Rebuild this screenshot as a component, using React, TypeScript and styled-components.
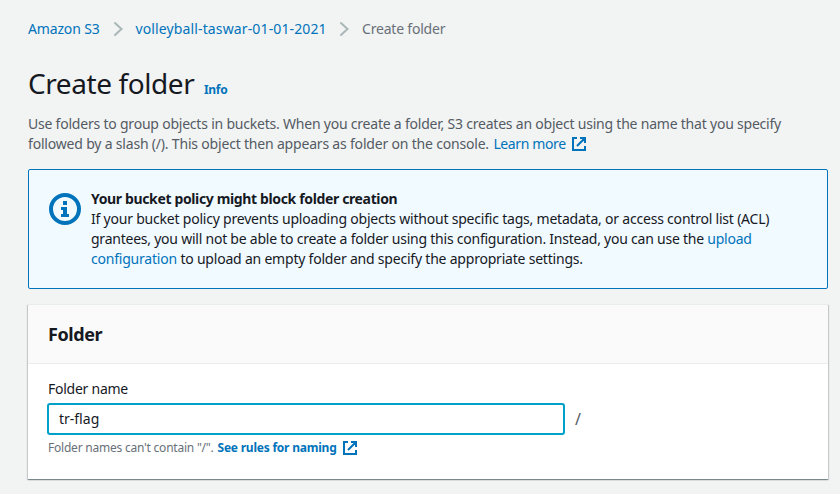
import React from 'react';
import styled, { createGlobalStyle } from 'styled-components';

const GlobalStyle = createGlobalStyle`
  * { box-sizing: border-box; }
  body {
    margin: 0;
    background: #f2f3f3;
    color: #16191f;
    font: 400 14px/20px "Noto Sans", "Open Sans", sans-serif;
  }
`;

const Page = styled.main`
  width: 800px;
  min-height: 494px;
  margin-left: 28px;
  padding-top: 19px;
`;

const Line = styled.span<{ $track?: number }>`
  display: block;
  white-space: nowrap;
  letter-spacing: ${(p) => p.$track ?? 0}px;
`;

const Breadcrumbs = styled.nav`
  display: flex;
  align-items: center;
  height: 20px;
`;

const Link = styled.a`
  color: #0073bb;
  text-decoration: none;
`;

const Crumb = styled(Link)<{ $width: number; $track?: number }>`
  width: ${(p) => p.$width}px;
  white-space: nowrap;
  letter-spacing: ${(p) => p.$track ?? 0}px;
`;

const CurrentCrumb = styled.span`
  color: #687078;
  white-space: nowrap;
  letter-spacing: -0.2px;
`;

const Chevron = styled.svg`
  width: 10px;
  height: 16px;
  margin: 0 13px;
  flex: none;
  fill: none;
  stroke: #aab7b8;
  stroke-width: 2;
  stroke-linecap: round;
`;

const TitleRow = styled.header`
  display: flex;
  align-items: baseline;
  margin-top: 26px;
  height: 36px;
`;

const Title = styled.h1`
  margin: 0;
  width: 176px;
  font-size: 28px;
  line-height: 36px;
  font-weight: 400;
  letter-spacing: -0.42px;
  white-space: nowrap;
`;

const InfoLink = styled(Link)`
  font-size: 12px;
  font-weight: 700;
  letter-spacing: -0.3px;
`;

const Intro = styled.p`
  margin: 13px 0 0;
  color: #545b64;
`;

const LearnMore = styled(Link)`
  margin-left: 1px;
  letter-spacing: -0.38px;
`;

const ExternalSvg = styled.svg`
  width: 14px;
  height: 14px;
  margin-left: 6px;
  vertical-align: -2px;
  flex: none;
  fill: none;
  stroke: #0073bb;
  stroke-width: 2;
`;

const Alert = styled.section`
  display: flex;
  margin-top: 15px;
  height: 120px;
  padding: 19px;
  border: 1px solid #0073bb;
  border-radius: 2px;
  background: #f1faff;
`;

const InfoSvg = styled.svg`
  width: 32px;
  height: 32px;
  margin: 4px 10px 0 1px;
  flex: none;
`;

const AlertBody = styled.div`
  min-width: 0;
`;

const AlertTitle = styled(Line)`
  font-weight: 700;
`;

const Card = styled.section`
  margin-top: 15px;
  height: 175px;
  background: #fff;
  box-shadow: 0 1px 1px 0 rgba(0, 28, 36, 0.3), 1px 1px 1px 0 rgba(0, 28, 36, 0.15),
    -1px 1px 1px 0 rgba(0, 28, 36, 0.15);
  border-top: 1px solid #eaeded;
`;

const CardHeader = styled.div`
  height: 59px;
  padding: 18px 20px 0;
  border-bottom: 1px solid #eaeded;
  background: #fafafa;
`;

const CardTitle = styled.h2`
  margin: 0;
  font-size: 18px;
  line-height: 22px;
  font-weight: 700;
  letter-spacing: -0.4px;
`;

const Field = styled.div`
  padding: 15px 20px 0;
`;

const Label = styled.label`
  display: block;
  letter-spacing: -0.25px;
`;

const InputRow = styled.div`
  display: flex;
  align-items: center;
  gap: 10px;
  margin: 4px 0 0 -1px;
  color: #545b64;
`;

const Suffix = styled.span`
  font-size: 16px;
`;

const Input = styled.input`
  display: block;
  width: 518px;
  height: 32px;
  padding: 0 10px 2px;
  border: 2px solid #00a1c9;
  border-radius: 3px;
  outline: none;
  background: #fff;
  color: #16191f;
  font: inherit;
`;

const Hint = styled.div`
  display: flex;
  align-items: center;
  margin-top: 3px;
  height: 20px;
  font-size: 12px;
  color: #687078;
  white-space: nowrap;
`;

const HintText = styled.span`
  width: 169.5px;
  letter-spacing: -0.22px;
`;

const HintLink = styled(Link)`
  width: 119.5px;
  font-weight: 700;
  letter-spacing: -0.22px;
`;

const Separator = () => (
  <Chevron viewBox="0 0 10 16" aria-hidden="true">
    <path d="M2 2l6.5 6L2 14" />
  </Chevron>
);

const ExternalIcon = () => (
  <ExternalSvg viewBox="0 0 14 14" aria-hidden="true">
    <path d="M5 1H1v12h12V9M8 1h5v5M13 1L5 9" />
  </ExternalSvg>
);

const InfoIcon = () => (
  <InfoSvg viewBox="0 0 32 32" aria-hidden="true">
    <circle cx="16" cy="16" r="14" fill="none" stroke="#0073bb" strokeWidth="4" />
    <path d="M14 8h4v4h-4zM12 14h6v7h2v3h-8v-3h2v-4h-2z" fill="#0073bb" />
  </InfoSvg>
);

export default function App() {
  return (
    <>
      <GlobalStyle />
      <Page>
        <Breadcrumbs aria-label="Breadcrumb">
          <Crumb $width={71.5} $track={-0.15}>Amazon S3</Crumb>
          <Separator />
          <Crumb $width={190.5} $track={0.13}>volleyball-taswar-01-01-2021</Crumb>
          <Separator />
          <CurrentCrumb>Create folder</CurrentCrumb>
        </Breadcrumbs>
        <TitleRow>
          <Title>Create folder</Title>
          <InfoLink>Info</InfoLink>
        </TitleRow>
        <Intro>
          <Line $track={-0.215}>
            Use folders to group objects in buckets. When you create a folder, S3 creates an object using the name that you specify
          </Line>
          <Line $track={-0.19}>
            followed by a slash (/). This object then appears as folder on the console. <LearnMore>Learn more</LearnMore>
            <ExternalIcon />
          </Line>
        </Intro>
        <Alert>
          <InfoIcon />
          <AlertBody>
            <AlertTitle $track={-0.36}>Your bucket policy might block folder creation</AlertTitle>
            <Line $track={-0.21}>
              If your bucket policy prevents uploading objects without specific tags, metadata, or access control list (ACL)
            </Line>
            <Line $track={-0.235}>
              grantees, you will not be able to create a folder using this configuration. Instead, you can use the <Link>upload</Link>
            </Line>
            <Line $track={-0.21}>
              <Link>configuration</Link> to upload an empty folder and specify the appropriate settings.
            </Line>
          </AlertBody>
        </Alert>
        <Card>
          <CardHeader>
            <CardTitle>Folder</CardTitle>
          </CardHeader>
          <Field>
            <Label htmlFor="folder-name">Folder name</Label>
            <InputRow>
              <Input id="folder-name" defaultValue="tr-flag" />
              <Suffix>/</Suffix>
            </InputRow>
            <Hint>
              <HintText>Folder names can't contain "/".</HintText>
              <HintLink>See rules for naming</HintLink>
              <ExternalIcon />
            </Hint>
          </Field>
        </Card>
      </Page>
    </>
  );
}
